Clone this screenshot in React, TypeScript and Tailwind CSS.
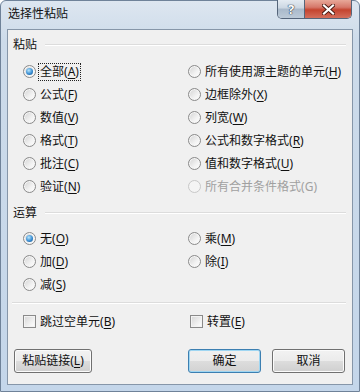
import React from "react";

const FONT = "font-['Noto_Sans','Noto_Sans_CJK_SC',sans-serif]";

function Label({ text, k, disabled }: { text: string; k: string; disabled?: boolean }) {
  return (
    <span className={disabled ? "text-[#a0a0a0]" : "text-[#111]"}>
      {text}(
      {disabled ? k : <span className="underline underline-offset-[2px] decoration-[1px]">{k}</span>})
    </span>
  );
}

function Radio({ checked, disabled }: { checked?: boolean; disabled?: boolean }) {
  return (
    <span
      className={
        "flex h-[13px] w-[13px] shrink-0 items-center justify-center rounded-full border " +
        (disabled
          ? "border-[#c8c8c8] bg-[#f4f4f4]"
          : "border-[#8a8a8a] bg-[linear-gradient(135deg,#d2d2d2,#f2f2f2_60%,#ffffff)] shadow-[inset_0_0_0_1px_#f6f6f6]")
      }
    >
      {checked && (
        <span className="h-[7px] w-[7px] rounded-full bg-[radial-gradient(circle_at_40%_35%,#b9e6fb,#3a8ed3_55%,#124b80)]" />
      )}
    </span>
  );
}

function RadioRow({
  text,
  k,
  checked,
  disabled,
  focus,
}: {
  text: string;
  k: string;
  checked?: boolean;
  disabled?: boolean;
  focus?: boolean;
}) {
  return (
    <div className="flex h-[23px] items-center">
      <Radio checked={checked} disabled={disabled} />
      <span
        className={
          "ml-[2px] border px-[1px] leading-[16px] " +
          (focus ? "border-dotted border-[#222]" : "border-transparent")
        }
      >
        <Label text={text} k={k} disabled={disabled} />
      </span>
    </div>
  );
}

function CheckRow({ text, k }: { text: string; k: string }) {
  return (
    <div className="flex h-[23px] items-center">
      <span className="h-[13px] w-[13px] shrink-0 border border-[#8a8a8a] bg-[linear-gradient(135deg,#d6d6d6,#f4f4f4_70%,#ffffff)] shadow-[inset_0_0_0_1px_#f3f3f3]" />
      <span className="ml-[4px] leading-[16px]">
        <Label text={text} k={k} />
      </span>
    </div>
  );
}

function Heading({ text }: { text: string }) {
  return (
    <div className="flex h-[16px] items-center pl-[5px] pr-[6px]">
      <span className="leading-[16px] text-[#111]">{text}</span>
      <span className="ml-[8px] h-[2px] flex-1 border-t border-b border-t-[#dcdcdc] border-b-white" />
    </div>
  );
}

function WinButton({ children, w, primary }: { children: React.ReactNode; w: string; primary?: boolean }) {
  return (
    <div
      className={
        "flex h-[24px] items-center justify-center rounded-[3px] border leading-[16px] text-[#111] " +
        w +
        (primary
          ? " border-[#3c7fb1] bg-[linear-gradient(#f0f0f0,#ebebeb_50%,#dddddd_50%,#d2d2d2)] shadow-[inset_0_0_0_1px_#9fd6f2]"
          : " border-[#707070] bg-[linear-gradient(#f2f2f2,#ebebeb_50%,#dddddd_50%,#cfcfcf)] shadow-[inset_0_0_0_1px_#fbfbfb]")
      }
    >
      {children}
    </div>
  );
}

export default function App() {
  return (
    <div className={"h-[392px] w-[360px] text-[12px] " + FONT}>
      <div className="flex h-full w-full flex-col rounded-t-[6px] border border-[#6f8299] bg-[linear-gradient(#dde6f0,#cddbea_40px,#c4d6ea)]">
        {/* title bar */}
        <div className="flex h-[28px] items-start justify-between">
          <span className="ml-[7px] mt-[5px] leading-[16px] text-[#111]">选择性粘贴</span>
          <div className="mr-[7px] flex h-[19px] -mt-[1px] overflow-hidden rounded-b-[5px] border border-t-0 border-[#55657a]">
            <div className="flex w-[27px] items-center justify-center border-r border-[#55657a] bg-[linear-gradient(#e4ebf2,#cbd6e2_45%,#a9b9ca_50%,#bccad8)]">
              <span className="text-[13px] font-bold leading-[13px] text-white [text-shadow:0_0_1px_#2d3c4d,0_0_1px_#2d3c4d,0_0_1px_#2d3c4d]">
                ?
              </span>
            </div>
            <div className="flex w-[46px] items-center justify-center bg-[linear-gradient(#e8a899,#d6786a_40%,#c4442f_55%,#d46e5c)]">
              <svg width="13" height="11" viewBox="0 0 13 11">
                <path d="M2 1.5 L11 9.5 M11 1.5 L2 9.5" stroke="#4a1a12" strokeWidth="4" strokeLinecap="square" />
                <path d="M2 1.5 L11 9.5 M11 1.5 L2 9.5" stroke="#ffffff" strokeWidth="2.2" strokeLinecap="square" />
              </svg>
            </div>
          </div>
        </div>
        {/* client */}
        <div className="mx-[6px] mb-[6px] flex flex-1 flex-col border border-[#8696a9] bg-[#f0f0f0]">
          <div className="pt-[7px]">
            <Heading text="粘贴" />
          </div>
          <div className="mt-[7px] grid grid-cols-[165px_1fr] pl-[15px]">
            <div className="flex flex-col">
              <RadioRow text="全部" k="A" checked focus />
              <RadioRow text="公式" k="F" />
              <RadioRow text="数值" k="V" />
              <RadioRow text="格式" k="T" />
              <RadioRow text="批注" k="C" />
              <RadioRow text="验证" k="N" />
            </div>
            <div className="flex flex-col">
              <RadioRow text="所有使用源主题的单元" k="H" />
              <RadioRow text="边框除外" k="X" />
              <RadioRow text="列宽" k="W" />
              <RadioRow text="公式和数字格式" k="R" />
              <RadioRow text="值和数字格式" k="U" />
              <RadioRow text="所有合并条件格式" k="G" disabled />
            </div>
          </div>
          <div className="mt-[7px]">
            <Heading text="运算" />
          </div>
          <div className="mt-[6px] grid grid-cols-[165px_1fr] pl-[15px]">
            <div className="flex flex-col">
              <RadioRow text="无" k="O" checked />
              <RadioRow text="加" k="D" />
              <RadioRow text="减" k="S" />
            </div>
            <div className="flex flex-col">
              <RadioRow text="乘" k="M" />
              <RadioRow text="除" k="I" />
            </div>
          </div>
          <div className="ml-[4px] mr-[6px] mt-[6px] h-[2px] border-t border-b border-t-[#dcdcdc] border-b-white" />
          <div className="mt-[6px] grid grid-cols-[167px_1fr] pl-[15px]">
            <CheckRow text="跳过空单元" k="B" />
            <CheckRow text="转置" k="E" />
          </div>
          <div className="mt-[16px] flex items-center pl-[6px] pr-[7px]">
            <WinButton w="w-[78px]">
              <Label text="粘贴链接" k="L" />
            </WinButton>
            <div className="flex-1" />
            <WinButton w="w-[73px]" primary>
              确定
            </WinButton>
            <div className="w-[11px]" />
            <WinButton w="w-[73px]">取消</WinButton>
          </div>
        </div>
      </div>
    </div>
  );
}
